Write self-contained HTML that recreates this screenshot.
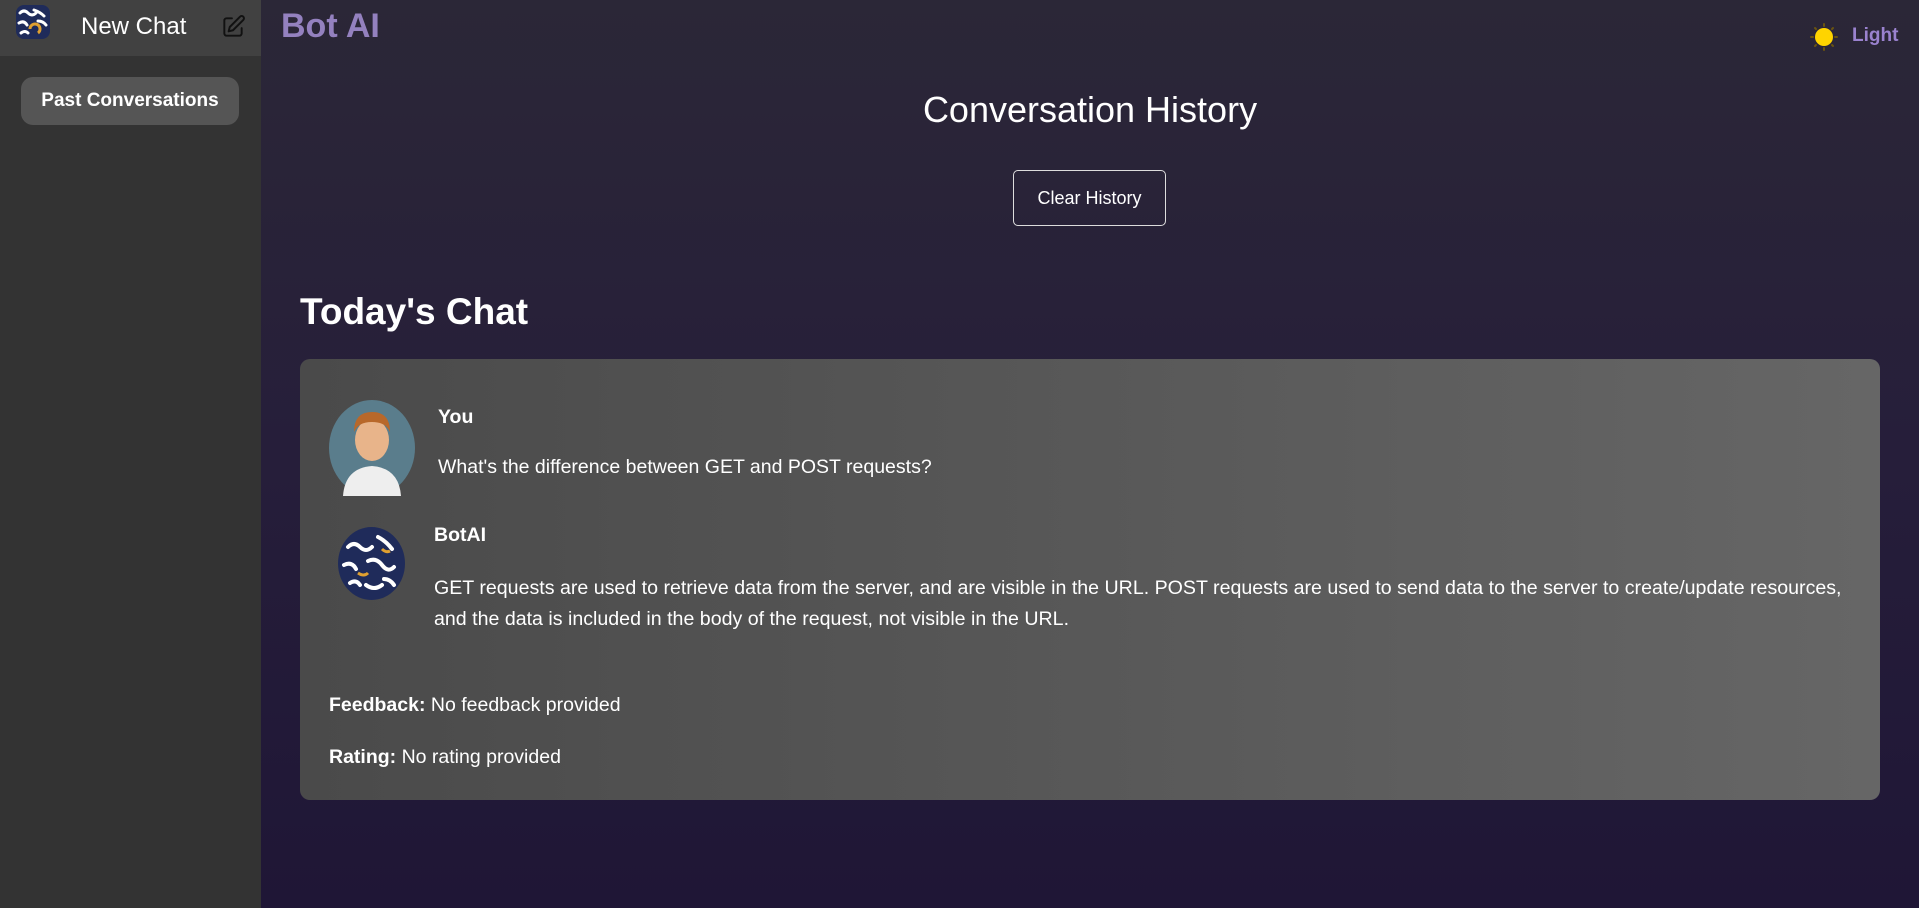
<!DOCTYPE html>
<html><head><meta charset="utf-8"><style>
*{margin:0;padding:0;box-sizing:border-box}
html,body{width:1919px;height:908px;overflow:hidden;font-family:"Liberation Sans",sans-serif}
body{background:linear-gradient(180deg,#2b2737 0%,#261e3a 50%,#1f1636 100%);position:relative;color:#fff}
.side{position:absolute;left:0;top:0;width:261px;height:908px;background:#333}
.top{height:56px;background:#414141;position:relative}
.logo{position:absolute;left:16px;top:5px;width:34px;height:34px;border-radius:8px;background:#1f2b5a;overflow:hidden}
.nc{position:absolute;left:81px;top:13px;font-size:24px;color:#fff}
.edit{position:absolute;left:220px;top:14px}
.past{position:absolute;left:21px;top:77px;width:218px;height:48px;background:#555;border-radius:12px;font-weight:bold;font-size:19px;text-align:center;line-height:48px}
.brand{position:absolute;left:281px;top:7px;font-size:34px;font-weight:bold;color:#9481bf}
.light{position:absolute;left:1852px;top:25px;font-size:19px;font-weight:bold;color:#9a82cf}
.sun{position:absolute;left:1806px;top:19px}
.h1{position:absolute;left:261px;width:1658px;text-align:center;top:89px;font-size:36px}
.btn{position:absolute;left:1013px;top:170px;width:153px;height:56px;border:1px solid #ddd;border-radius:5px;font-size:18px;text-align:center;line-height:54px}
.today{position:absolute;left:300px;top:291px;font-size:37px;font-weight:bold}
.card{position:absolute;left:300px;top:359px;width:1580px;height:441px;border-radius:10px;background:linear-gradient(90deg,#4a4a4a,#666)}
.t{position:absolute;font-size:19.5px;color:#fff}
b{font-weight:bold}
</style></head><body>
<div class="side">
 <div class="top">
  <div class="logo"><svg width="34" height="34"><g fill="none" stroke="#fff" stroke-width="3" stroke-linecap="round"><path d="M4 8q4-4 8 0t8 0"/><path d="M18 5q6 2 10 6"/><path d="M3 18q5-3 8 2"/><path d="M22 16q5 0 8 4"/><path d="M5 28q4-3 7 0"/></g><path d="M14 24a5 5 0 1 1 8 4" stroke="#e0a030" stroke-width="3" fill="none"/></svg></div>
  <div class="nc">New Chat</div>
  <svg class="edit" width="26" height="26" viewBox="0 0 24 24" fill="none" stroke="#111" stroke-width="1.8" stroke-linecap="round" stroke-linejoin="round"><path d="M11 4H6a2 2 0 0 0-2 2v12a2 2 0 0 0 2 2h12a2 2 0 0 0 2-2v-5"/><path d="M18.5 2.5a2.1 2.1 0 0 1 3 3L12 15l-4 1 1-4z"/></svg>
 </div>
 <div class="past">Past Conversations</div>
</div>
<div class="brand">Bot AI</div>
<svg class="sun" width="36" height="36" viewBox="0 0 36 36"><circle cx="18" cy="18" r="9" fill="#ffd400"/><g stroke="#6a5410" stroke-width="2" stroke-linecap="round"><path d="M18 5v2M18 29v2M5 18h2M29 18h2M9 9l1 1M26 26l1 1M9 27l1-1M26 10l1-1"/></g></svg>
<div class="light">Light</div>
<div class="h1">Conversation History</div>
<div class="btn">Clear History</div>
<div class="today">Today's Chat</div>
<div class="card">
 <svg style="position:absolute;left:29px;top:41px" width="86" height="96"><ellipse cx="43" cy="48" rx="43" ry="48" fill="#5a7d8c"/><path d="M14 96q2-28 29-30q27 2 29 30z" fill="#eee"/><ellipse cx="43" cy="40" rx="17" ry="21" fill="#e8b48a"/><path d="M25 32q0-20 18-20q18 0 18 20q-4-10-18-10q-14 0-18 10z" fill="#b8682a"/></svg>
 <div class="t" style="left:138px;top:47px"><b>You</b></div>
 <div class="t" style="left:138px;top:97px">What's the difference between GET and POST requests?</div>
 <svg style="position:absolute;left:38px;top:168px" width="67" height="73"><ellipse cx="33.5" cy="36.5" rx="33.5" ry="36.5" fill="#1f2b5a"/><g fill="none" stroke="#fff" stroke-width="4" stroke-linecap="round"><path d="M10 20q6-6 12 0t12 0"/><path d="M40 10q8 4 14 12"/><path d="M6 38q8-4 12 4"/><path d="M30 34q8-4 14 4t12 2"/><path d="M12 56q6-4 10 2"/><path d="M28 58q8 6 16 0"/><path d="M46 52q6 0 10 6"/></g><g stroke="#e0a030" stroke-width="3" fill="none"><path d="M20 46q6 4 10 0"/><path d="M44 22q4 4 8 2"/></g></svg>
 <div class="t" style="left:134px;top:214px;top:165px"><b>BotAI</b></div>
 <div class="t" style="left:134px;top:214px;line-height:31px;width:1480px;font-size:19.6px">GET requests are used to retrieve data from the server, and are visible in the URL. POST requests are used to send data to the server to create/update resources,<br>and the data is included in the body of the request, not visible in the URL.</div>
 <div class="t" style="left:29px;top:335px"><b>Feedback:</b> No feedback provided</div>
 <div class="t" style="left:29px;top:387px"><b>Rating:</b> No rating provided</div>
</div>
</body></html>
